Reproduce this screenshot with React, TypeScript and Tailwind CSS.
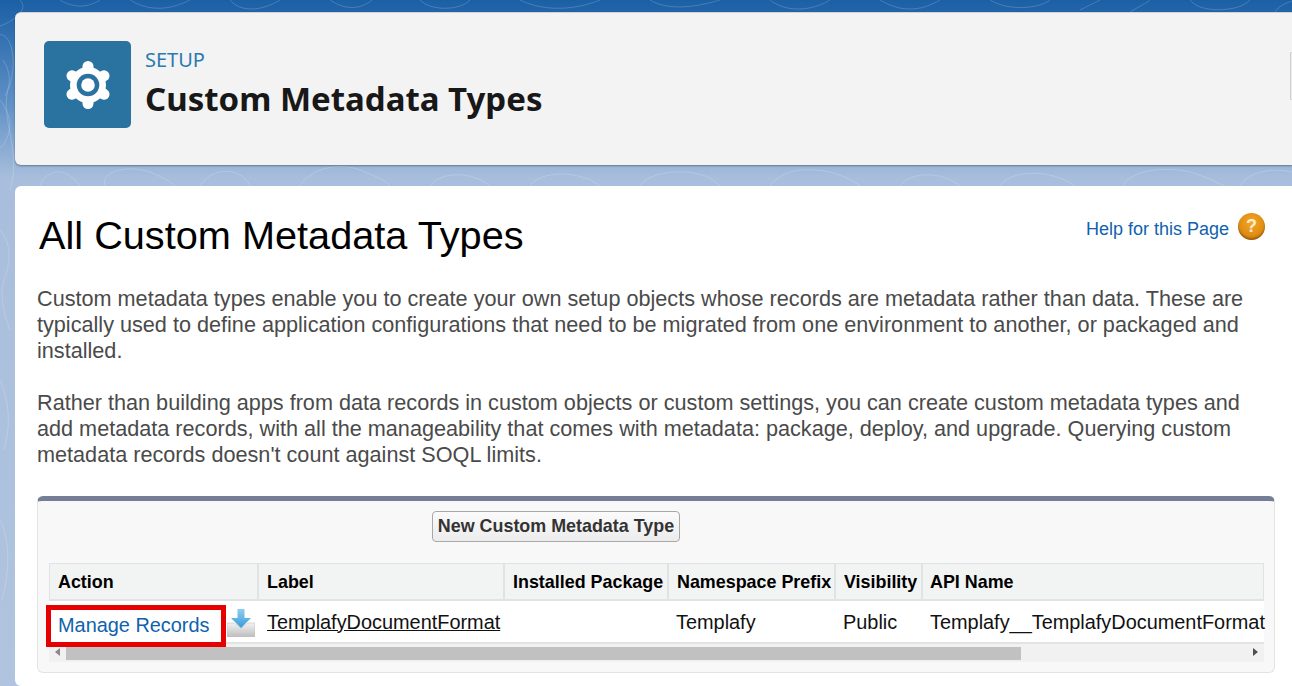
const sans = "font-['Liberation_Sans',Arial,sans-serif]";

function Contours() {
  const lines = [
    "M-10 40 C 10 20 20 60 8 90 C 0 120 22 150 10 190 M20 0 C 30 10 12 22 0 26",
    "M0 100 C 8 110 14 125 6 140 C 2 150 -4 150 -8 146 M3 60 C 10 70 12 84 5 96",
    "M60 0 C 70 6 84 10 100 0 M130 0 C 150 12 170 10 190 0 M230 0 C 240 12 260 12 280 0 M330 0 C 345 10 360 10 372 0",
    "M420 0 C 430 11 460 11 470 0 M520 0 C 540 10 570 12 600 0 M650 0 C 670 12 700 6 720 0 M770 0 C 785 12 810 12 830 0",
    "M880 0 C 900 12 920 12 940 0 M990 0 C 1010 12 1040 8 1050 0 M1080 10 L1100 0 M1130 12 C 1140 6 1145 4 1150 0 M1190 0 C 1200 14 1240 12 1250 0 M1275 12 C 1280 4 1290 2 1295 0",
    "M40 186 C 45 172 60 168 70 176 C 76 180 78 184 80 186 M105 186 C 100 170 130 165 150 172 C 165 178 170 182 175 186",
    "M200 186 C 210 168 240 165 250 186 M300 186 C 310 168 340 162 360 170 C 375 176 385 180 390 186 M430 186 C 440 172 470 170 490 186",
    "M530 186 C 540 170 580 170 600 186 M640 186 C 650 170 690 168 710 178 L720 186 M770 186 C 780 172 800 166 830 172 C 845 176 855 182 860 186",
    "M900 186 C 910 172 940 170 960 186 M1000 186 C 1010 170 1050 168 1075 186 M1123 186 C 1130 170 1165 166 1190 172 C 1205 176 1215 182 1225 186 M1240 186 C 1250 170 1275 168 1292 172",
    "M0 230 C 10 240 12 260 4 280 C 0 290 2 310 10 330 M0 380 C 8 400 12 420 4 450 M0 520 C 10 540 10 570 2 600",
  ];
  return (
    <svg className="absolute inset-0 h-full w-full" viewBox="0 0 1292 686" fill="none">
      {lines.map((d, i) => (
        <path key={i} d={d} stroke="#ffffff" strokeOpacity="0.18" strokeWidth="1" />
      ))}
    </svg>
  );
}

function Gear() {
  const angles = [90, 30, -30, -90, -150, 150];
  return (
    <svg viewBox="-24 -24 48 48" className="h-12 w-12">
      <circle cx="0" cy="0" r="18" fill="#fff" />
      {angles.map((a) => (
        <line
          key={a}
          x1="0"
          y1="0"
          x2={18.5 * Math.cos((a * Math.PI) / 180)}
          y2={-18.5 * Math.sin((a * Math.PI) / 180)}
          stroke="#fff"
          strokeWidth="11"
          strokeLinecap="round"
        />
      ))}
      <circle cx="0" cy="0" r="11.300" fill="#2a72a0" />
      <circle cx="0" cy="0" r="6.800" fill="#fff" />
    </svg>
  );
}

function HelpIcon() {
  return (
    <span className="flex h-[27px] w-[27px] items-center justify-center rounded-full bg-[radial-gradient(circle_at_50%_35%,#f5a623,#dc8a12_65%,#a9690f)] text-[18px] font-bold text-[#fdeccd] shadow-[inset_0_-2px_2px_rgba(120,70,10,0.55)]">
      ?
    </span>
  );
}

function DownloadIcon() {
  return (
    <svg viewBox="0 0 28 28" className="mt-[1px] h-7 w-7 shrink-0">
      <defs>
        <linearGradient id="tray" x1="0" y1="0" x2="0" y2="1">
          <stop offset="0" stopColor="#f2f2f2" />
          <stop offset="1" stopColor="#bdbdbd" />
        </linearGradient>
        <linearGradient id="arrow" x1="0" y1="0" x2="0" y2="1">
          <stop offset="0" stopColor="#8fcdf0" />
          <stop offset="1" stopColor="#3a9ad9" />
        </linearGradient>
      </defs>
      <path d="M0 14h7l7 5 7-5h7v14H0Z" fill="url(#tray)" stroke="#c4c4c4" strokeWidth="0.6" />
      <path d="M10.500 0h7v9H24L14 19 4 9h6.500Z" fill="url(#arrow)" />
    </svg>
  );
}

const columns = [
  { label: "Action", w: "w-[209px] pl-[8px] border-r-2" },
  { label: "Label", w: "w-[246px] pl-[8px] border-r-2" },
  { label: "Installed Package", w: "w-[164px] pl-[8px] border-r-2" },
  { label: "Namespace Prefix", w: "w-[167px] pl-[8px] border-r-2" },
  { label: "Visibility", w: "w-[87px] pl-[8px] border-r-2" },
  { label: "API Name", w: "flex-1 pl-[7px]" },
];

export default function App() {
  return (
    <div className={`relative h-[686px] w-[1292px] overflow-hidden bg-[linear-gradient(180deg,#1b5fa5_0%,#5f90c6_15%,#a8bedc_26%,#b0c4df_100%)] ${sans}`}>
      <Contours />
      <div className="relative flex h-full flex-col pl-[15px] pt-3">
        <header className="relative flex h-[153px] items-start rounded-l-[6px] border-t border-[#d0d3d8] bg-[#f3f3f3] pl-[29px] pt-7 shadow-[0_1px_2px_rgba(0,0,0,0.35)]">
          <div className="flex h-[87px] w-[87px] items-center justify-center rounded-[5px] bg-[#2a72a0]">
            <Gear />
          </div>
          <div className="ml-[14px] flex flex-col font-['Noto_Sans',sans-serif]">
            <span className="mt-[5px] text-[20px] leading-[28px] text-[#2a7ab0]">SETUP</span>
            <h1 className="mt-[2px] text-[33px] font-bold leading-[46px] text-[#181818]">Custom Metadata Types</h1>
          </div>
          <div className="absolute right-0 top-[39px] h-12 w-[2px] rounded-l-[3px] border border-r-0 border-[#cfcfcf] bg-[#ececec]" />
        </header>

        <main className="mt-[21px] flex-1 rounded-l-[6px] bg-white pl-[22px] pr-[17px]">
          <div className="flex items-start justify-between pr-[10px] pt-[26px]">
            <h2 className="pl-[2px] text-[39.7px] font-normal leading-[46px] text-black">All Custom Metadata Types</h2>
            <div className="mt-[-2px] flex items-center gap-[9px]">
              <a className="pt-[6px] text-[18px] text-[#0f62ae]">Help for this Page</a>
              <HelpIcon />
            </div>
          </div>

          <p className="mt-[28px] text-[21.65px] leading-[26px] text-[#4a4a4a]">
            Custom metadata types enable you to create your own setup objects whose records are metadata rather than data. These are typically used to define application configurations that need to be migrated from one environment to another, or packaged and installed.
          </p>
          <p className="mt-[26px] text-[21.65px] leading-[26px] text-[#4a4a4a]">
            Rather than building apps from data records in custom objects or custom settings, you can create custom metadata types and add metadata records, with all the manageability that comes with metadata: package, deploy, and upgrade. Querying custom metadata records doesn't count against SOQL limits.
          </p>

          <section className="relative mt-[28px] h-[177px] rounded-[6px] border border-t-[5px] border-[#e3e3e3] border-t-[#747e96] bg-[#f8f8f8] pl-[11px] pr-[10px]">
            <div className="flex h-[62px] pl-[383px] pt-[10px]">
              <button className="h-[31px] w-[248px] rounded-[4px] border border-[#a8a8a8] bg-[linear-gradient(180deg,#fbfbfb,#ececec)] text-[17.9px] font-bold leading-none text-[#333]">
                New Custom Metadata Type
              </button>
            </div>
            <div className="flex h-[38px] border border-b-2 border-[#e0e3e5] bg-[#f2f3f3] text-[17.9px] font-bold text-black">
              {columns.map((c) => (
                <div key={c.label} className={`${c.w} flex items-center whitespace-nowrap border-[#e0e3e5] pt-[1px]`}>
                  {c.label}
                </div>
              ))}
            </div>
            <div className="flex h-[43px] items-center border-b-2 border-[#e3e3e3] bg-white pt-[2px] text-[19.9px] text-[#111]">
              <div className="flex w-[209px] shrink-0 items-center justify-between pl-[9px] pr-[3px]">
                <a className="pt-[6px] text-[#0f62ae]">Manage Records</a>
                <DownloadIcon />
              </div>
              <div className="w-[246px] shrink-0 overflow-hidden whitespace-nowrap pl-[9px] underline">TemplafyDocumentFormat</div>
              <div className="w-[164px] shrink-0" />
              <div className="w-[167px] shrink-0 pl-[8px]">Templafy</div>
              <div className="w-[87px] shrink-0 pl-[8px]">Public</div>
              <div className="min-w-0 flex-1 whitespace-nowrap pl-[8px]">Templafy__TemplafyDocumentFormat</div>
            </div>
            <div className="flex h-[18px] items-end bg-[#f1f1f1] pb-[2px]">
              <div className="flex h-full w-[17px] items-center justify-center">
                <span className="h-0 w-0 border-y-[4px] border-r-[5px] border-y-transparent border-r-[#8a8a8a]" />
              </div>
              <div className="h-[13px] w-[955px] bg-[#c1c1c1]" />
              <div className="flex-1" />
              <div className="flex h-full w-[18px] items-center justify-center">
                <span className="h-0 w-0 border-y-[4px] border-l-[5px] border-y-transparent border-l-[#505050]" />
              </div>
            </div>
            <div className="pointer-events-none absolute left-[8px] top-[104px] h-[42px] w-[180px] border-[5px] border-[#e60000]" />
          </section>
        </main>
      </div>
    </div>
  );
}
